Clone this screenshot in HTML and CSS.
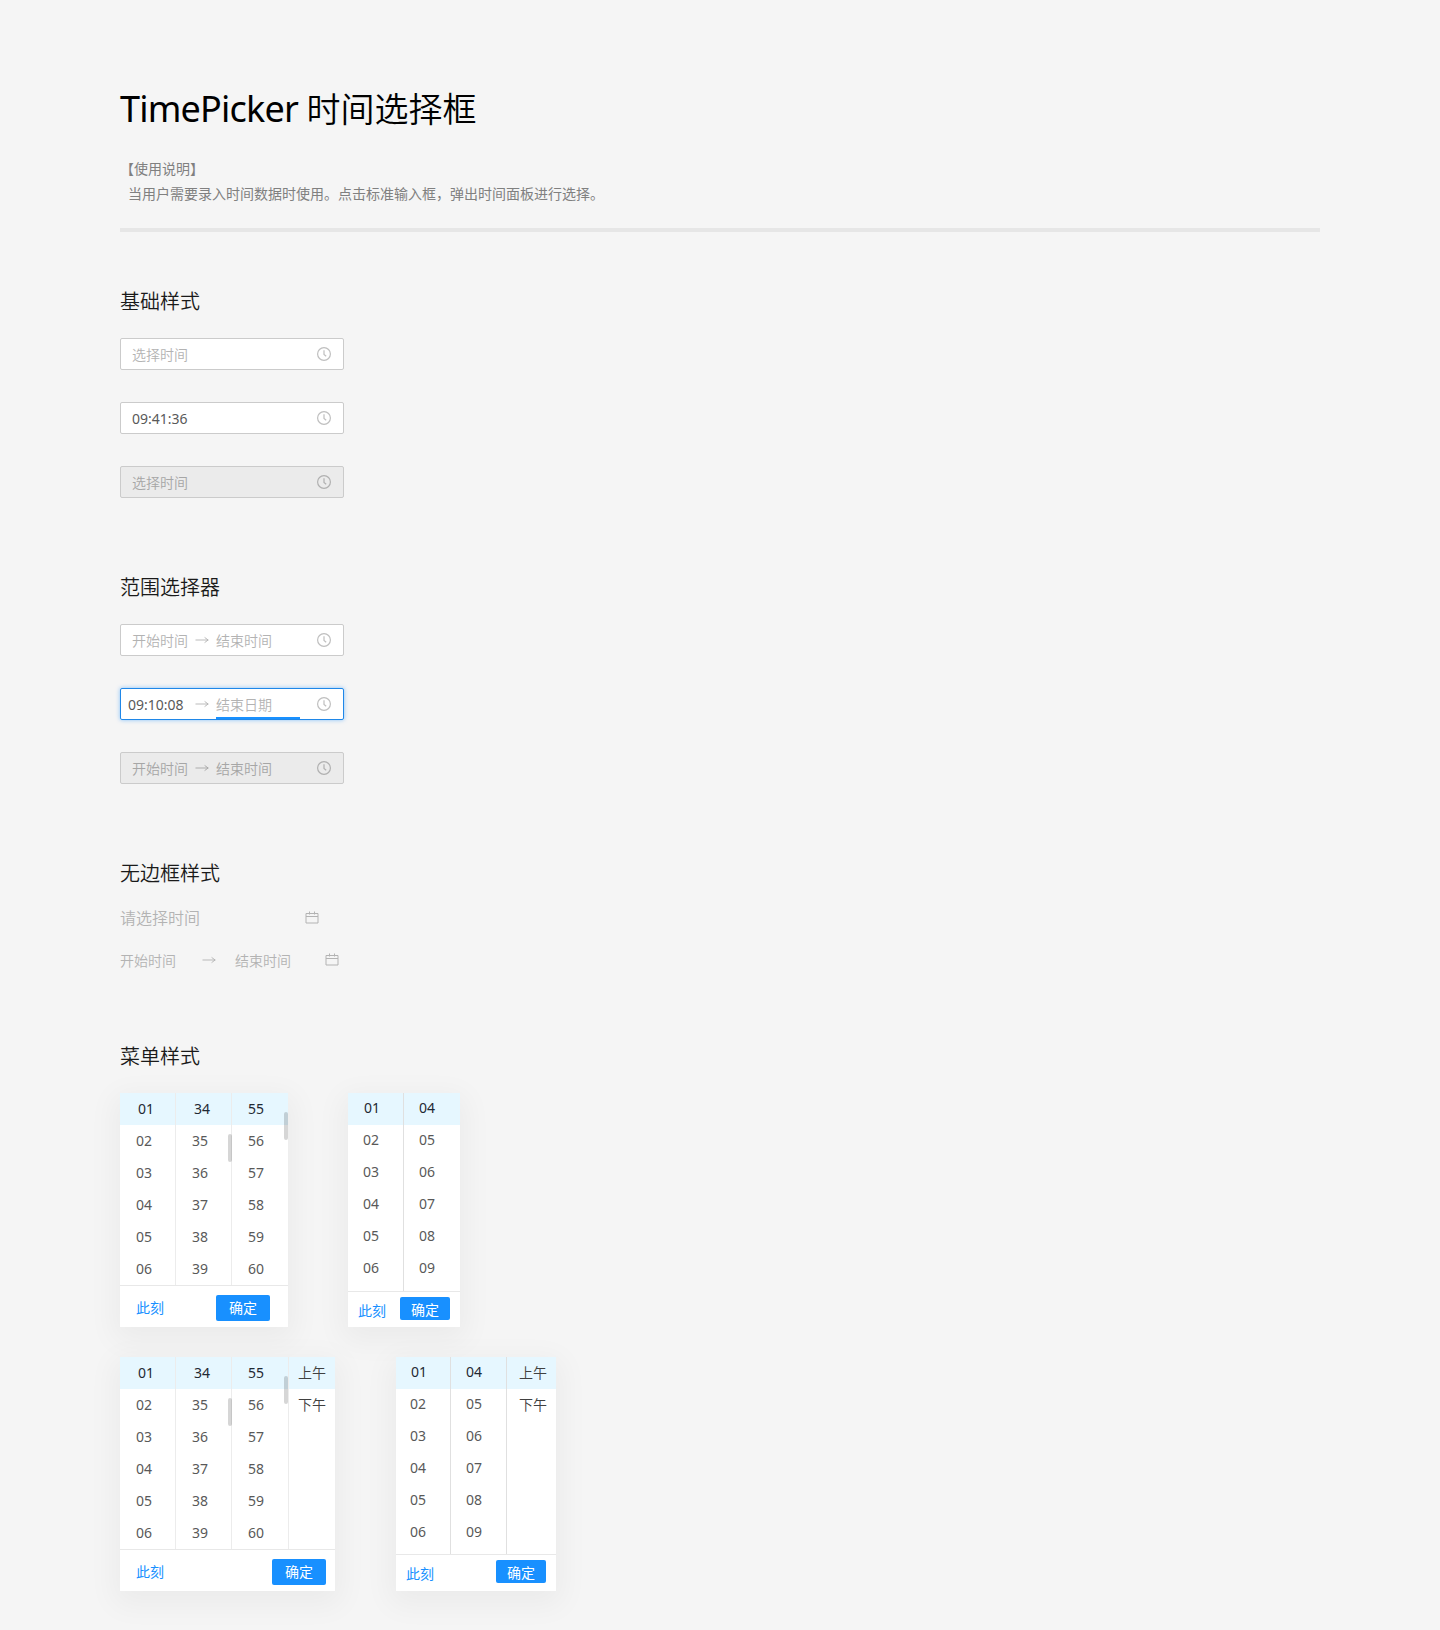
FILE: index.html
```html
<!DOCTYPE html>
<html lang="zh-CN">
<head>
<meta charset="utf-8">
<title>TimePicker 时间选择框</title>
<link rel="stylesheet" href="styles.css">
</head>
<body>
<svg width="0" height="0" class="sprite" aria-hidden="true">
  <symbol id="clock" viewBox="0 0 14 14"><circle cx="7" cy="7" r="6.4"/><path d="M7 3.2V7.4L9.2 9.2"/></symbol>
  <symbol id="calendar" viewBox="0 0 14 13"><path d="M1 2.5H13V12H1ZM1 5.5H13M4.5 .5V3.5M9.5 .5V3.5"/></symbol>
  <symbol id="arrow" viewBox="0 0 14 8"><path d="M.5 4H13.2M9.6 1.4L13.2 4L9.6 6.6"/></symbol>
</svg>
<main class="page">
  <header class="intro">
    <h1>TimePicker <span class="zh">时间选择框</span></h1>
    <p>【使用说明】</p>
    <p class="indent">当用户需要录入时间数据时使用。点击标准输入框，弹出时间面板进行选择。</p>
  </header>

  <section class="group">
    <h2>基础样式</h2>
    <div class="fields">
      <div class="field"><span>选择时间</span><svg class="clock"><use href="#clock"/></svg></div>
      <div class="field"><span class="value">09:41:36</span><svg class="clock"><use href="#clock"/></svg></div>
      <div class="field disabled"><span>选择时间</span><svg class="clock"><use href="#clock"/></svg></div>
    </div>
  </section>

  <section class="group">
    <h2>范围选择器</h2>
    <div class="fields">
      <div class="field"><span class="start">开始时间</span><svg class="arrow"><use href="#arrow"/></svg><span>结束时间</span><svg class="clock"><use href="#clock"/></svg></div>
      <div class="field active"><span class="start value">09:10:08</span><svg class="arrow"><use href="#arrow"/></svg><span class="end">结束日期</span><svg class="clock"><use href="#clock"/></svg></div>
      <div class="field disabled"><span class="start">开始时间</span><svg class="arrow"><use href="#arrow"/></svg><span>结束时间</span><svg class="clock"><use href="#clock"/></svg></div>
    </div>
  </section>

  <section class="group plain">
    <h2>无边框样式</h2>
    <div class="bare large"><span>请选择时间</span><svg class="calendar"><use href="#calendar"/></svg></div>
    <div class="bare"><span>开始时间</span><svg class="arrow"><use href="#arrow"/></svg><span>结束时间</span><svg class="calendar"><use href="#calendar"/></svg></div>
  </section>

  <section class="group">
    <h2>菜单样式</h2>
    <div class="panels">
      <div class="panel seconds">
        <div class="columns">
          <ul><li>01</li><li>02</li><li>03</li><li>04</li><li>05</li><li>06</li></ul>
          <ul class="scroll mid"><li>34</li><li>35</li><li>36</li><li>37</li><li>38</li><li>39</li></ul>
          <ul class="scroll top"><li>55</li><li>56</li><li>57</li><li>58</li><li>59</li><li>60</li></ul>
        </div>
        <footer><a>此刻</a><button>确定</button></footer>
      </div>
      <div class="panel minutes">
        <div class="columns">
          <ul><li>01</li><li>02</li><li>03</li><li>04</li><li>05</li><li>06</li></ul>
          <ul><li>04</li><li>05</li><li>06</li><li>07</li><li>08</li><li>09</li></ul>
        </div>
        <footer><a>此刻</a><button>确定</button></footer>
      </div>
    </div>
    <div class="panels">
      <div class="panel seconds half-day">
        <div class="columns">
          <ul><li>01</li><li>02</li><li>03</li><li>04</li><li>05</li><li>06</li></ul>
          <ul class="scroll mid"><li>34</li><li>35</li><li>36</li><li>37</li><li>38</li><li>39</li></ul>
          <ul class="scroll top"><li>55</li><li>56</li><li>57</li><li>58</li><li>59</li><li>60</li></ul>
          <ul class="period"><li>上午</li><li>下午</li></ul>
        </div>
        <footer><a>此刻</a><button>确定</button></footer>
      </div>
      <div class="panel minutes half-day">
        <div class="columns">
          <ul><li>01</li><li>02</li><li>03</li><li>04</li><li>05</li><li>06</li></ul>
          <ul><li>04</li><li>05</li><li>06</li><li>07</li><li>08</li><li>09</li></ul>
          <ul class="period"><li>上午</li><li>下午</li></ul>
        </div>
        <footer><a>此刻</a><button>确定</button></footer>
      </div>
    </div>
  </section>
</main>
</body>
</html>
```
FILE: styles.css
```css
* { box-sizing: border-box; }
body {
  margin: 0;
  background: #f5f5f5;
  font: 14px/32px "Noto Sans", "Noto Sans CJK SC", sans-serif;
  color: #595959;
}
h1, h2, p, ul { margin: 0; padding: 0; font-weight: 400; }
ul { list-style: none; }
svg { fill: none; stroke: currentColor; flex: none; }
.sprite { position: absolute; }
.page { width: 1200px; height: 1630px; margin: 0 auto; padding-top: 84px; overflow: visible; }

.intro { height: 148px; border-bottom: 4px solid #e6e6e6; color: #808080; }
h1 { font-size: 36px; line-height: 50px; letter-spacing: -.8px; color: #000; white-space: nowrap; margin-bottom: 22px; }
h1 .zh { font-size: 34px; font-weight: 350; letter-spacing: 0; }
.intro p { line-height: 25px; }
.intro .indent { padding-left: 8px; }

.group { padding-top: 56px; height: 286px; }
h2 { font-size: 20px; line-height: 28px; font-weight: 350; color: #1a1a1a; margin-bottom: 22px; }
.fields { display: flex; flex-direction: column; gap: 32px; }
.field {
  width: 224px; height: 32px; padding: 0 12px 0 11px;
  display: flex; align-items: center;
  border: 1px solid #cbcbcb; border-radius: 2px;
  background: #fff; color: #b3b3b3; font-weight: 350; line-height: 30px;
}
.field span { height: 30px; line-height: 32px; }
.field .value { color: #595959; font-weight: 400; }
.field .start { width: 63px; }
.disabled { background: #ebebeb; color: #a6a6a6; }
.active { border-color: #1f87e8; box-shadow: 0 0 4px rgba(24, 144, 255, .5); padding-left: 7px; }
.active .start { width: 67px; }
.active .end { width: 84px; border-bottom: 2px solid #1890ff; }
.clock { width: 14px; height: 14px; margin-left: auto; color: #bfbfbf; stroke-width: 1.2; }
.disabled .clock { color: #b0b0b0; }
.arrow { width: 14px; height: 8px; margin-right: 7px; stroke-width: .9; }

.plain { height: 183px; }
.plain h2 { margin-bottom: 17px; }
.bare { display: flex; align-items: center; width: 219px; height: 25px; color: #b3b3b3; font-weight: 350; line-height: 25px; }
.bare span { height: 25px; line-height: 27px; }
.bare .arrow { margin: 0 19px 0 26px; }
.bare .calendar { width: 14px; height: 13px; margin-left: auto; }
.large { width: 199px; font-size: 16px; margin-bottom: 17px; }

.panels { display: flex; gap: 60px; margin-bottom: 30px; }
.panel { width: 168px; height: 234px; display: flex; flex-direction: column; background: #fff; box-shadow: 0 8px 28px 6px rgba(0, 0, 0, .045); }
.columns { display: grid; grid-template-columns: 56px 56px 1fr; height: 193px; border-bottom: 1px solid #e8e8e8; background: linear-gradient(#e6f7ff 32px, transparent 32px); }
.columns ul { position: relative; padding-left: 16px; border-right: 1px solid #ececec; }
.columns ul:last-child { border-right: 0; }
.columns li { height: 32px; line-height: 32px; }
.columns li:first-child { color: #1f2933; }
.seconds ul:nth-child(1) li:first-child { padding-left: 2px; }
.seconds ul:nth-child(2) li:first-child { padding-left: 2px; }
.columns .period li { font-weight: 350; color: #404040; }
.scroll::after { content: ""; position: absolute; right: -1px; width: 4px; height: 28px; border-radius: 2px; background: rgba(0, 0, 0, .16); }
.mid::after { top: 41px; }
.top::after { top: 19px; right: 0; }
.panel footer { flex: 1; display: flex; justify-content: space-between; align-items: center; padding: 2px 18px 0 16px; }
.panel a { color: #1890ff; line-height: 26px; margin-top: 0; font-weight: 400; }
.panel button { width: 54px; height: 26px; padding: 0; border: 0; border-radius: 2px; background: #1890ff; color: #fff; font: inherit; line-height: 26px; }
.seconds.half-day { width: 215px; }
.seconds.half-day .columns { grid-template-columns: 56px 56px 57px 1fr; }
.seconds .period { padding-left: 9px; }
.seconds.half-day footer { padding-right: 9px; }

.minutes { width: 112px; }
.minutes .columns { grid-template-columns: 56px 1fr; height: 199px; }
.minutes ul { padding-left: 15px; border-color: #e0e0e0; }
.minutes li { position: relative; top: -1px; }
.minutes .period li { top: 0; }
.minutes ul:first-child li:first-child { left: 1px; }
.minutes footer { padding: 0 10px; align-items: flex-start; }
.minutes a { margin-top: 6px; }
.minutes button { width: 50px; height: 23px; line-height: 25px; margin-top: 5px; }
.minutes.half-day { width: 160px; margin-left: 1px; }
.minutes.half-day .columns { grid-template-columns: 55px 56px 1fr; height: 198px; }
.minutes.half-day ul:first-child { padding-left: 14px; }
.minutes .period { padding-left: 12px; }
```
